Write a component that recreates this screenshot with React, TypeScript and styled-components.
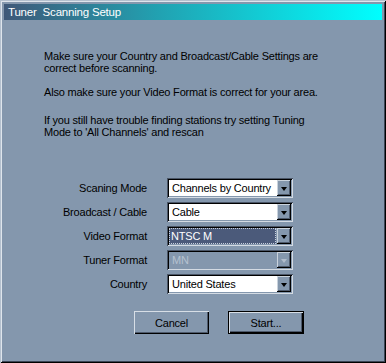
import React from "react";
import styled, { createGlobalStyle, css } from "styled-components";

const FACE = "#8497ad";

const Global = createGlobalStyle`
  html, body { margin: 0; padding: 0; background: ${FACE}; }
  body { font-family: "Liberation Sans", Arial, sans-serif; font-size: 11px; }
`;

const Window = styled.div`
  box-sizing: border-box;
  width: 386px;
  height: 363px;
  padding: 4px;
  background: ${FACE};
  display: flex;
  flex-direction: column;
  box-shadow:
    inset 1px 1px #b4c0ce,
    inset -1px -1px #000000,
    inset 2px 2px #dfe5ec,
    inset -2px -2px #3c4656;
`;

const TitleBar = styled.div`
  height: 16px;
  flex: none;
  display: flex;
  align-items: center;
  padding-left: 4px;
  background: linear-gradient(to right, #3f5878 0%, #22a0b0 40%, #00ffff 100%);
  color: #ffffff;
  font-size: 11.5px;
  letter-spacing: -0.2px;
  white-space: pre;
`;

const Body = styled.div`
  display: flex;
  flex-direction: column;
  color: #000;
  letter-spacing: -0.2px;
`;

const Message = styled.div`
  padding: 30px 0 0 40px;
  display: flex;
  flex-direction: column;
`;

const Para = styled.p<{ $gap: number }>`
  margin: ${(p) => p.$gap}px 0 0 0;
  line-height: 12px;
  font-size: 11px;
`;

const Form = styled.div`
  margin-top: 40px;
  display: grid;
  grid-template-columns: 143px 126px;
  column-gap: 20px;
  row-gap: 4px;
  align-items: center;
`;

const Label = styled.div`
  text-align: right;
  font-size: 11px;
  line-height: 20px;
`;

const Combo = styled.div`
  box-sizing: border-box;
  height: 20px;
  padding: 2px;
  display: flex;
  box-shadow:
    inset 1px 1px #4a5566,
    inset -1px -1px #d4dbe3,
    inset 2px 2px #000000,
    inset -2px -2px ${FACE};
`;

type FieldKind = "normal" | "selected" | "disabled";

const Field = styled.div<{ $kind: FieldKind }>`
  flex: 1;
  display: flex;
  align-items: center;
  padding-left: 3px;
  font-size: 11px;
  white-space: nowrap;
  overflow: hidden;
  background: #ffffff;
  color: #000;
  ${(p) =>
    p.$kind === "selected" &&
    css`
      background: #4b5a7a;
      color: #ffffff;
      outline: 1px dotted #c8d0dc;
      outline-offset: -1px;
      padding-left: 2px;
      margin-right: 1px;
    `}
  ${(p) =>
    p.$kind === "disabled" &&
    css`
      background: ${FACE};
      color: #b6c2d0;
    `}
`;

const DropButton = styled.div`
  width: 14px;
  flex: none;
  background: ${FACE};
  display: flex;
  align-items: center;
  justify-content: center;
  box-shadow:
    inset -1px -1px #000000,
    inset 1px 1px #c9d2dc,
    inset -2px -2px #4e5a6c;
`;

const Arrow = styled.span<{ $disabled?: boolean }>`
  width: 0;
  height: 0;
  border-left: 3.5px solid transparent;
  border-right: 3.5px solid transparent;
  border-top: 4px solid ${(p) => (p.$disabled ? "#b0bccb" : "#000")};
  margin-top: 1px;
`;

const Buttons = styled.div`
  margin-top: 17px;
  padding-left: 130px;
  display: flex;
  gap: 19px;
`;

const Button = styled.button<{ $default?: boolean }>`
  box-sizing: border-box;
  width: 75px;
  height: 23px;
  padding: 0;
  border: none;
  background: ${FACE};
  font-family: "Liberation Sans", Arial, sans-serif;
  font-size: 11px;
  letter-spacing: -0.2px;
  color: #000;
  box-shadow:
    inset 1px 1px #d7dee6,
    inset -1px -1px #000000,
    inset -2px -2px #4e5a6c;
  ${(p) =>
    p.$default &&
    css`
      width: 76px;
      box-shadow:
        inset 0 0 0 1px #000000,
        inset 2px 2px #d7dee6,
        inset -2px -2px #000000,
        inset -3px -3px #4e5a6c;
    `}
`;

const rows: { label: string; value: string; kind: FieldKind }[] = [
  { label: "Scaning Mode", value: "Channels by Country", kind: "normal" },
  { label: "Broadcast / Cable", value: "Cable", kind: "normal" },
  { label: "Video Format", value: "NTSC M", kind: "selected" },
  { label: "Tuner Format", value: "MN", kind: "disabled" },
  { label: "Country", value: "United States", kind: "normal" },
];

export default function App() {
  return (
    <>
      <Global />
      <Window>
        <TitleBar>{"Tuner  Scanning Setup"}</TitleBar>
        <Body>
          <Message>
            <Para $gap={0}>
              Make sure your Country and Broadcast/Cable Settings are
              <br />
              correct before scanning.
            </Para>
            <Para $gap={12}>Also make sure your Video Format is correct for your area.</Para>
            <Para $gap={16}>
              If you still have trouble finding stations try setting Tuning
              <br />
              Mode to 'All Channels' and rescan
            </Para>
          </Message>
          <Form>
            {rows.map((r) => (
              <React.Fragment key={r.label}>
                <Label>{r.label}</Label>
                <Combo>
                  <Field $kind={r.kind}>{r.value}</Field>
                  <DropButton>
                    <Arrow $disabled={r.kind === "disabled"} />
                  </DropButton>
                </Combo>
              </React.Fragment>
            ))}
          </Form>
          <Buttons>
            <Button>Cancel</Button>
            <Button $default>Start...</Button>
          </Buttons>
        </Body>
      </Window>
    </>
  );
}
